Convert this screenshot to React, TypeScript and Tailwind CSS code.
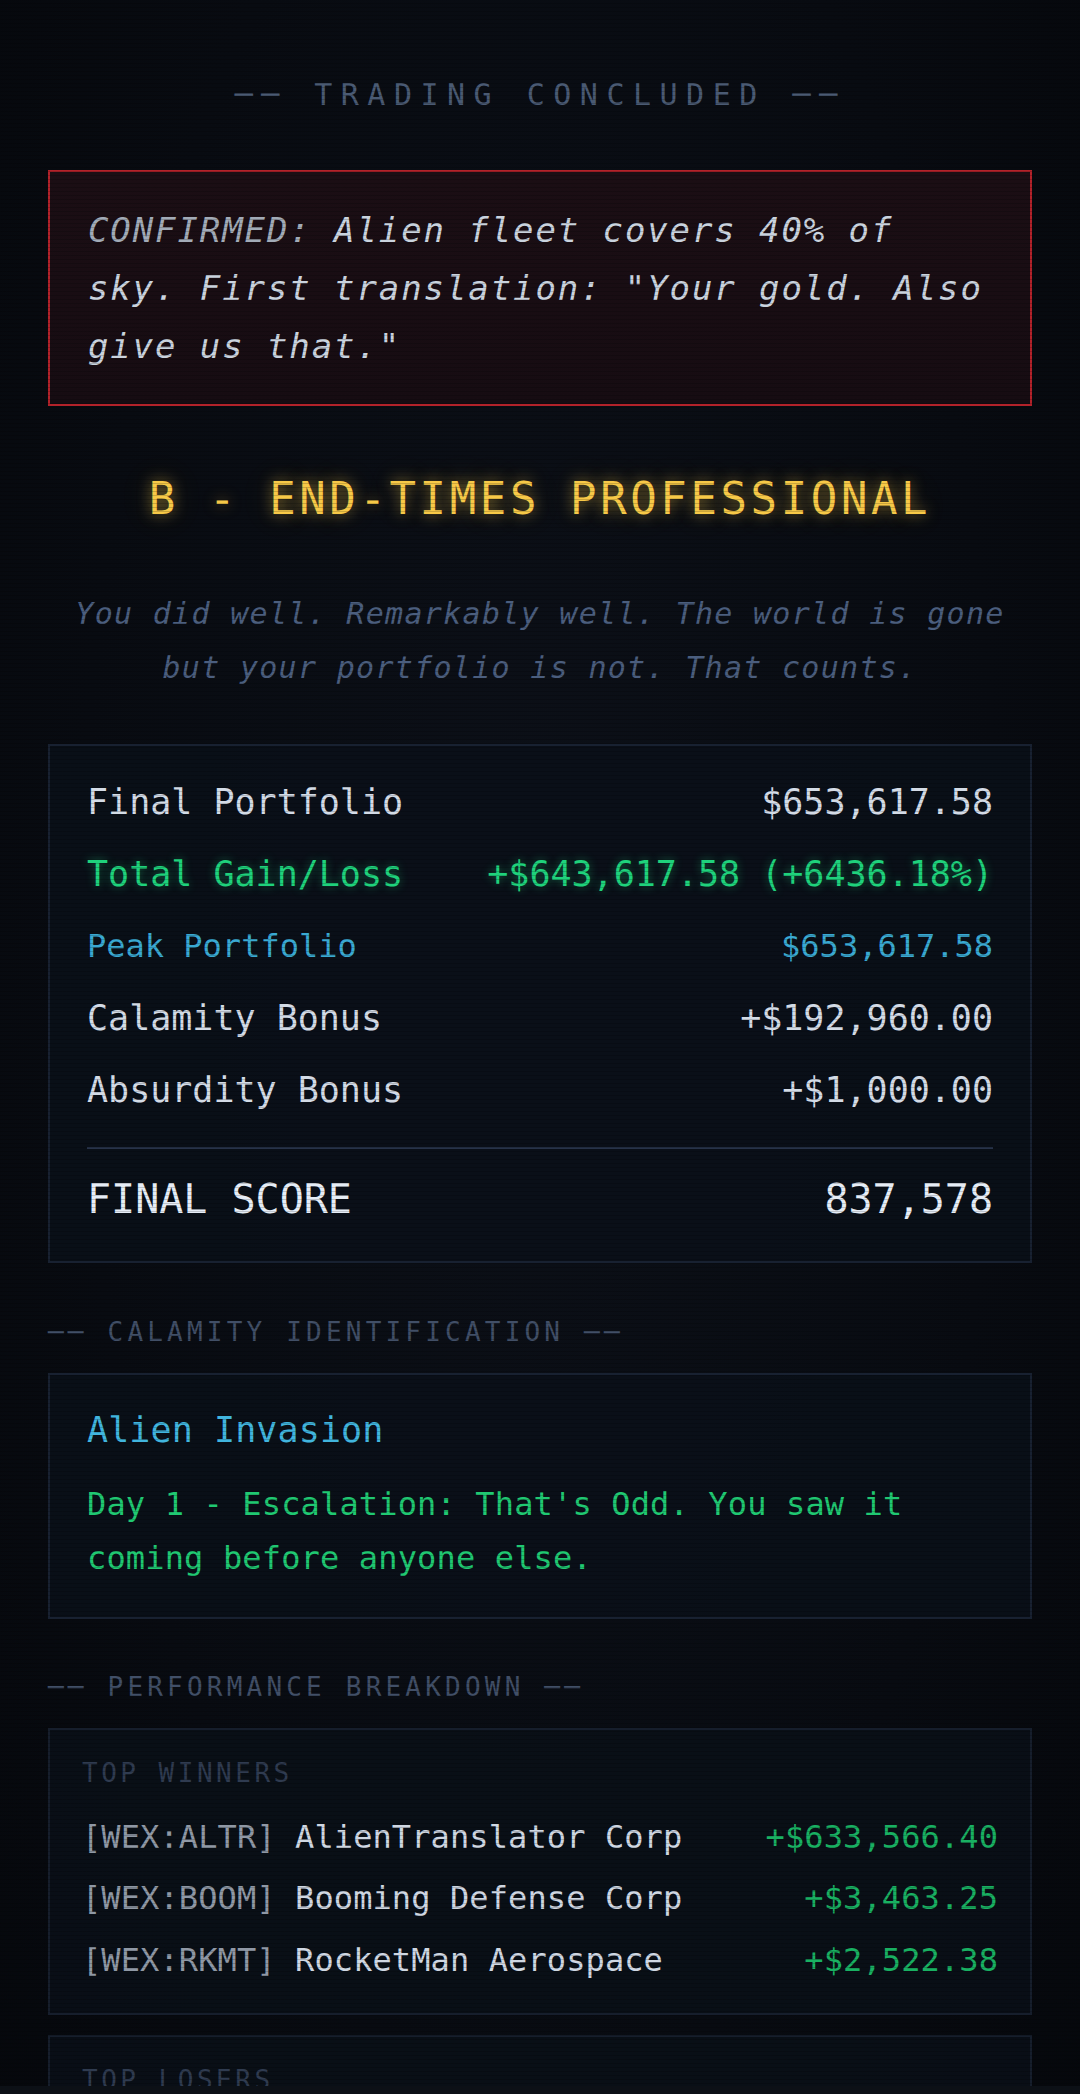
const STATS = [
  { label: "Final Portfolio", value: "$653,617.58", tone: "text-[35px] text-[#d3dbe6]" },
  {
    label: "Total Gain/Loss",
    value: "+$643,617.58 (+6436.18%)",
    tone: "text-[35px] text-[#1fd27c] [text-shadow:0_0_10px_rgba(31,210,124,0.45)]",
  },
  { label: "Peak Portfolio", value: "$653,617.58", tone: "text-[32px] text-[#3aa9d2]" },
  { label: "Calamity Bonus", value: "+$192,960.00", tone: "text-[35px] text-[#d3dbe6]" },
  { label: "Absurdity Bonus", value: "+$1,000.00", tone: "text-[35px] text-[#d3dbe6]" },
];

const WINNERS = [
  { ticker: "[WEX:ALTR]", name: "AlienTranslator Corp", value: "+$633,566.40" },
  { ticker: "[WEX:BOOM]", name: "Booming Defense Corp", value: "+$3,463.25" },
  { ticker: "[WEX:RKMT]", name: "RocketMan Aerospace", value: "+$2,522.38" },
];

const LOSERS = [
  { ticker: "[WEX:GLDR]", name: "Global Gold Reserve", value: "-$4,812.10" },
  { ticker: "[WEX:SKYV]", name: "SkyView Observatories", value: "-$1,206.55" },
];

function SectionLabel({ children }: { children: string }) {
  return (
    <div className="text-[26px] leading-[34px] tracking-[4.2px] text-[#414f67] whitespace-nowrap">
      ── {children} ──
    </div>
  );
}

function TradeList({ title, rows, valueTone }: { title: string; rows: typeof WINNERS; valueTone: string }) {
  return (
    <div className="border-2 border-[#161e2c] bg-[#0a0f17]/90 px-[32px] pt-[28px] pb-[22px]">
      <div className="text-[26px] leading-[30px] tracking-[3.5px] text-[#2f3b50] mb-[18px]">{title}</div>
      {rows.map((row) => (
        <div key={row.ticker} className="h-[61.5px] flex items-center justify-between text-[32px] tracking-[0.1px]">
          <span className="whitespace-nowrap">
            <span className="text-[#8f98a5]">{row.ticker}</span>{" "}
            <span className="text-[#cfd7e2]">{row.name}</span>
          </span>
          <span className={valueTone}>{row.value}</span>
        </div>
      ))}
    </div>
  );
}

export default function App() {
  return (
    <div className="relative min-h-screen w-full overflow-hidden bg-[radial-gradient(ellipse_at_50%_40%,#0c1018_0%,#080b11_60%,#05070b_100%)] font-['DejaVu_Sans_Mono',monospace]">
      <div className="relative px-[48px] pt-[78px] pb-[60px]">
        <div className="text-center text-[30px] leading-[34px] tracking-[8.5px] text-[#4a5a73] whitespace-nowrap mb-[58px]">
          ── TRADING CONCLUDED ──
        </div>

        <div className="border-2 border-[#b3222a] bg-gradient-to-b from-[#1b0e14] to-[#160c12] px-[38px] py-[29px]">
          <p className="italic text-[34px] leading-[58px] tracking-[1.9px] text-[#cad3de]">
            <span className="text-[#a2abb7]">CONFIRMED:</span> Alien fleet covers 40% of sky. First translation:
            "Your gold. Also give us that."
          </p>
        </div>

        <h1 className="mt-[65px] text-center text-[44px] leading-[56px] tracking-[3.6px] text-[#f7c948] whitespace-nowrap [text-shadow:0_0_14px_rgba(247,201,72,0.55),0_0_34px_rgba(247,201,72,0.2)]">
          B - END-TIMES PROFESSIONAL
        </h1>

        <p className="mt-[60px] text-center italic text-[30px] leading-[53.5px] tracking-[1.3px] text-[#4b5e7e]">
          You did well. Remarkably well. The world is gone but your portfolio is not. That counts.
        </p>

        <div className="mt-[50px] border-2 border-[#182131] bg-[#0a0f18]/90 px-[37px] pt-[20px] pb-[26px]">
          {STATS.map((s) => (
            <div key={s.label} className={`h-[72px] flex items-center justify-between whitespace-nowrap ${s.tone}`}>
              <span>{s.label}</span>
              <span>{s.value}</span>
            </div>
          ))}
          <div className="mt-[21px] h-[2px] bg-[#27334a]" />
          <div className="mt-[14px] h-[72px] flex items-center justify-between text-[40px] text-[#e6edf6]">
            <span>FINAL SCORE</span>
            <span>837,578</span>
          </div>
        </div>

        <div className="mt-[52px] mb-[24px]">
          <SectionLabel>CALAMITY IDENTIFICATION</SectionLabel>
        </div>

        <div className="border-2 border-[#182131] bg-[#0a0f18]/90 px-[37px] pt-[33px] pb-[32px]">
          <div className="text-[35px] leading-[45px] tracking-[0.1px] text-[#41b5de]">Alien Invasion</div>
          <p className="mt-[24px] text-[32px] leading-[54px] tracking-[0.15px] text-[#20c872]">
            Day 1 - Escalation: That's Odd. You saw it coming before anyone else.
          </p>
        </div>

        <div className="mt-[51px] mb-[24px]">
          <SectionLabel>PERFORMANCE BREAKDOWN</SectionLabel>
        </div>

        <div className="flex flex-col gap-[20px]">
          <TradeList title="TOP WINNERS" rows={WINNERS} valueTone="text-[#19b062]" />
          <TradeList title="TOP LOSERS" rows={LOSERS} valueTone="text-[#d6454a]" />
        </div>
      </div>

      {/* crt scanlines */}
      <div className="pointer-events-none absolute inset-0 bg-[repeating-linear-gradient(0deg,rgba(0,0,0,0.18)_0px,rgba(0,0,0,0.18)_1px,transparent_1px,transparent_4px)]" />
      <div className="fixed bottom-0 left-0 right-0 h-[8px] bg-[#0c1016]" />
    </div>
  );
}
